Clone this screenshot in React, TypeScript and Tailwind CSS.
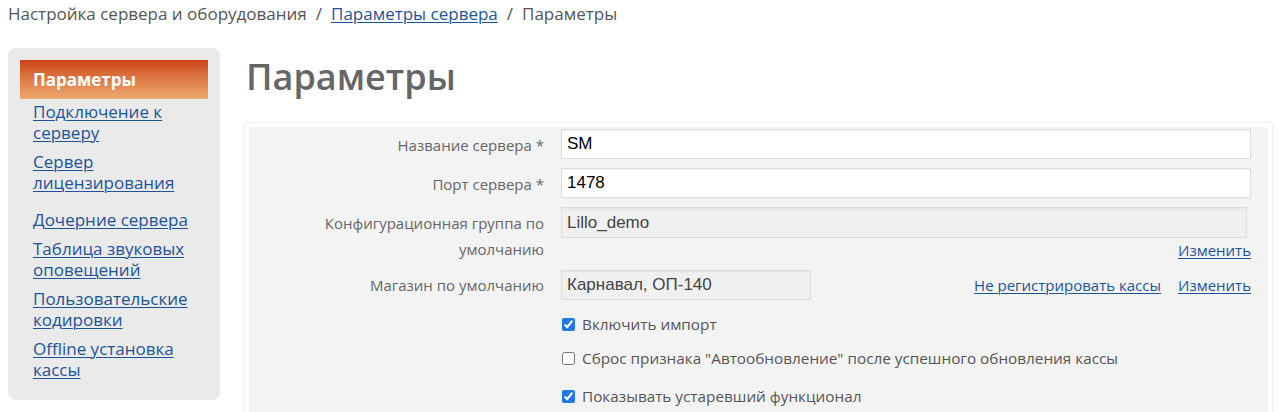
import React from "react";

const link = "text-[#1d5499] underline underline-offset-2 decoration-1";

function Row({ label, children, pt = "pt-[3px]" }: { label: React.ReactNode; children: React.ReactNode; pt?: string }) {
  return (
    <div className="flex">
      <div className={`w-[295px] shrink-0 text-right text-[15px] leading-[26px] text-[#666] ${pt}`}>{label}</div>
      <div className="flex-1 ml-[17px] mr-[17px]">{children}</div>
    </div>
  );
}

const inputBase =
  "h-[30px] border border-[#dcdcdc] px-[5px] flex items-center text-[17px] shadow-[inset_0_1px_2px_rgba(0,0,0,0.06)] font-['Liberation_Sans',Arial,sans-serif]";

export default function App() {
  return (
    <div className="w-[1279px] h-[412px] overflow-hidden bg-white font-['Open_Sans',sans-serif]">
      <div className="pl-2 pt-[2px] h-[48px] text-[17px] leading-[24px] text-[#555]">
        Настройка сервера и оборудования<span className="mx-[9px]">/</span>
        <a className={link} href="#">Параметры сервера</a>
        <span className="mx-[9px]">/</span>Параметры
      </div>
      <div className="flex">
        <div className="ml-2 w-[212px] h-[352px] shrink-0 bg-[#eaeaea] rounded-lg p-3">
          <div className="h-[39px] bg-gradient-to-b from-[#cc4315] to-[#ebaa6e] pl-[13px] flex items-center text-white font-bold text-[17px]">
            Параметры
          </div>
          <div className="flex flex-col pl-[13px] text-[17px] leading-[21px] mt-[2px]">
            <a className={link} href="#">Подключение к<br />серверу</a>
            <a className={`${link} mt-2`} href="#">Сервер<br />лицензирования</a>
            <a className={`${link} mt-[16px]`} href="#">Дочерние сервера</a>
            <a className={`${link} mt-2`} href="#">Таблица звуковых<br />оповещений</a>
            <a className={`${link} mt-2`} href="#">Пользовательские<br />кодировки</a>
            <a className={`${link} mt-2`} href="#">Offline установка<br />кассы</a>
          </div>
        </div>
        <div className="ml-[25px] flex-1 mr-[7px]">
          <h1 className="text-[36px] leading-[50px] font-semibold text-[#666] pl-px mt-[4px] h-[71px]">Параметры</h1>
          <div className="border-4 border-white shadow-[0_0_3px_rgba(0,0,0,0.15)] bg-[#f3f3f3] pt-[2px] h-[300px]">
            <Row label="Название сервера *">
              <div className={`${inputBase} bg-white text-black`}>SM</div>
            </Row>
            <div className="h-[9px]" />
            <Row label="Порт сервера *">
              <div className={`${inputBase} bg-white text-black`}>1478</div>
            </Row>
            <div className="h-[9px]" />
            <Row label={<>Конфигурационная группа по<br />умолчанию</>}>
              <div className={`${inputBase} h-[31px] mr-[4px] bg-[#f0f0f0] text-[#444]`}>Lillo_demo</div>
              <div className="text-right text-[15px] leading-[21px] mt-[2px]">
                <a className={link} href="#">Изменить</a>
              </div>
            </Row>
            <div className="h-[8px]" />
            <Row label="Магазин по умолчанию" pt="pt-[2px]">
              <div className="flex items-center">
                <div className={`${inputBase} w-[250px] bg-[#f0f0f0] text-[#444]`}>Карнавал, ОП-140</div>
                <div className="flex-1" />
                <a className={`${link} text-[15px]`} href="#">Не регистрировать кассы</a>
                <a className={`${link} text-[15px] ml-[17px]`} href="#">Изменить</a>
              </div>
            </Row>
            <div className="ml-[312px] text-[15.3px] text-[#555] leading-[22px]">
              <label className="flex items-center gap-[7px] mt-[13px]">
                <input type="checkbox" defaultChecked className="w-[13px] h-[13px] m-0 ml-px accent-[#1e78e6]" />
                Включить импорт
              </label>
              <label className="flex items-center gap-[7px] mt-[12px]">
                <input type="checkbox" className="w-[13px] h-[13px] m-0 ml-px" />
                Сброс признака "Автообновление" после успешного обновления кассы
              </label>
              <label className="flex items-center gap-[7px] mt-[16px]">
                <input type="checkbox" defaultChecked className="w-[13px] h-[13px] m-0 ml-px accent-[#1e78e6]" />
                Показывать устаревший функционал
              </label>
            </div>
          </div>
        </div>
      </div>
    </div>
  );
}
